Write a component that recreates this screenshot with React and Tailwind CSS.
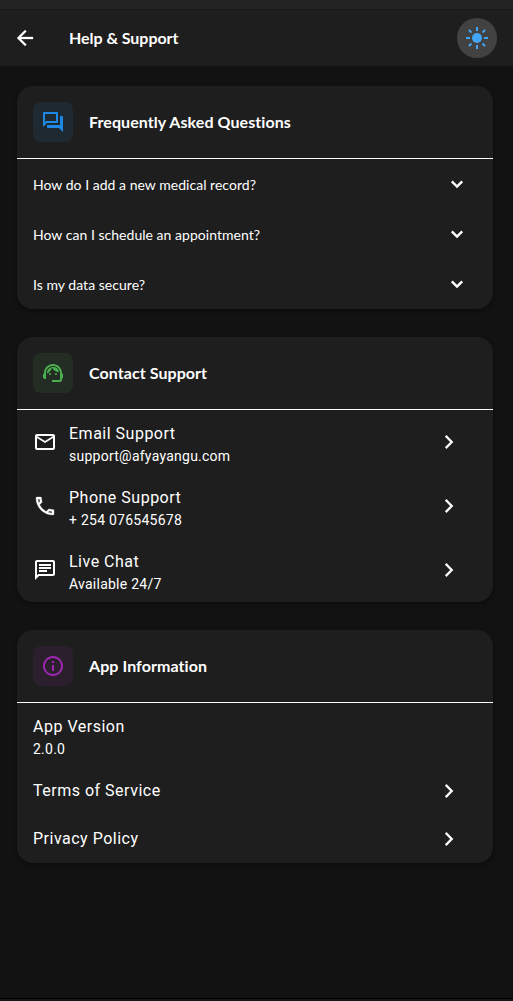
import React from "react";
import {
  MdArrowBack,
  MdOutlineQuestionAnswer,
  MdOutlineSupportAgent,
  MdOutlineInfo,
  MdOutlineEmail,
  MdOutlinePhone,
  MdOutlineChat,
} from "react-icons/md";

function Card({ icon, title, children }) {
  return (
    <section className="w-[476px] rounded-2xl bg-[#1e1e1e] shadow-[0_2px_4px_rgba(0,0,0,0.35)]">
      <div className="flex h-[73px] items-center gap-4 border-b border-white px-4">
        {icon}
        <h2 className="font-['Lato'] text-base font-bold tracking-[0.07px] text-white">{title}</h2>
      </div>
      {children}
    </section>
  );
}

function Sun() {
  return (
    <svg viewBox="-12 -12 24 24" className="size-6 stroke-[#42a5f5] stroke-2">
      <circle r="5" className="fill-[#42a5f5] stroke-none" />
      <path d="M0-11v4M0 7v4M-11 0h4M7 0h4M-8.1-8.1l2.6 2.6M5.5 5.5l2.6 2.6M-8.1 8.1l2.6-2.6M5.5-5.5l2.6-2.6" />
    </svg>
  );
}

function ChevronDown() {
  return (
    <svg viewBox="0 0 24 24" className="size-6 fill-none stroke-white stroke-[2.4]">
      <path d="M6.8 9.3 12 14.5l5.2-5.2" />
    </svg>
  );
}

function ChevronRight() {
  return (
    <svg viewBox="0 0 24 24" className="size-6 fill-none stroke-white stroke-[2.3]">
      <path d="m8.7 5.9 6 6.1-6 6.1" />
    </svg>
  );
}

function Question({ children }) {
  return (
    <div className="flex h-[50px] items-center justify-between pr-6 pl-4">
      <span className="pt-0.5 font-['Lato'] text-sm font-normal tracking-[0.03px] text-white">{children}</span>
      <ChevronDown />
    </div>
  );
}

function Contact({ icon, title, detail, arrow = true }) {
  return (
    <div className="flex h-16 items-center pr-8 pl-4">
      {icon && <span className="mr-3">{icon}</span>}
      <div className="grow pt-1 font-['Roboto'] text-white">
        <div className="text-base leading-6 tracking-[0.5px]">{title}</div>
        <div className="text-sm leading-5 tracking-[0.25px]">{detail}</div>
      </div>
      {arrow && <ChevronRight />}
    </div>
  );
}

function LinkRow({ children }) {
  return (
    <div className="flex h-12 items-center justify-between pr-8 pl-4">
      <span className="font-['Roboto'] text-base leading-6 tracking-[0.5px] text-white">{children}</span>
      <ChevronRight />
    </div>
  );
}

export default function App() {
  return (
    <div className="flex h-[1001px] w-[513px] flex-col overflow-hidden bg-[#121212]">
      <div className="h-[9px] shrink-0 bg-[#222222]" />
      <header className="flex h-[57px] shrink-0 items-center border-t border-[#191919] bg-[#1e1e1e] pr-4 pl-[13px]">
        <MdArrowBack className="size-6 text-white [&>path:last-child]:stroke-white [&>path:last-child]:stroke-[0.3]" />
        <h1 className="ml-8 grow font-['Lato'] text-base font-bold tracking-[-0.04px] text-white">Help &amp; Support</h1>
        <button className="flex size-10 items-center justify-center rounded-full bg-[#424242]">
          <Sun />
        </button>
      </header>
      <main className="flex grow flex-col gap-7 pt-5 pl-[17px]">
        <Card
          title="Frequently Asked Questions"
          icon={
            <span className="flex size-10 items-center justify-center rounded-lg bg-[#1e2932]">
              <MdOutlineQuestionAnswer className="size-6 text-[#1e88e5]" />
            </span>
          }
        >
          <Question>How do I add a new medical record?</Question>
          <Question>How can I schedule an appointment?</Question>
          <Question>Is my data secure?</Question>
        </Card>
        <Card
          title="Contact Support"
          icon={
            <span className="flex size-10 items-center justify-center rounded-lg bg-[#232d23]">
              <MdOutlineSupportAgent className="size-6 text-[#4caf50]" />
            </span>
          }
        >
          <Contact icon={<MdOutlineEmail className="size-6 text-white" />} title="Email Support" detail="support@afyayangu.com" />
          <Contact
            icon={<MdOutlinePhone className="size-6 text-white [&>path:last-child]:stroke-white [&>path:last-child]:stroke-[0.3]" />}
            title="Phone Support"
            detail="+ 254 076545678"
          />
          <Contact icon={<MdOutlineChat className="size-6 text-white" />} title="Live Chat" detail="Available 24/7" />
        </Card>
        <Card
          title="App Information"
          icon={
            <span className="flex size-10 items-center justify-center rounded-lg bg-[#2b1f2d]">
              <MdOutlineInfo className="size-6 text-[#9c27b0]" />
            </span>
          }
        >
          <Contact title="App Version" detail="2.0.0" arrow={false} />
          <LinkRow>Terms of Service</LinkRow>
          <LinkRow>Privacy Policy</LinkRow>
        </Card>
      </main>
      <footer className="h-[3px] shrink-0 border-t border-black bg-[#161616]" />
    </div>
  );
}
